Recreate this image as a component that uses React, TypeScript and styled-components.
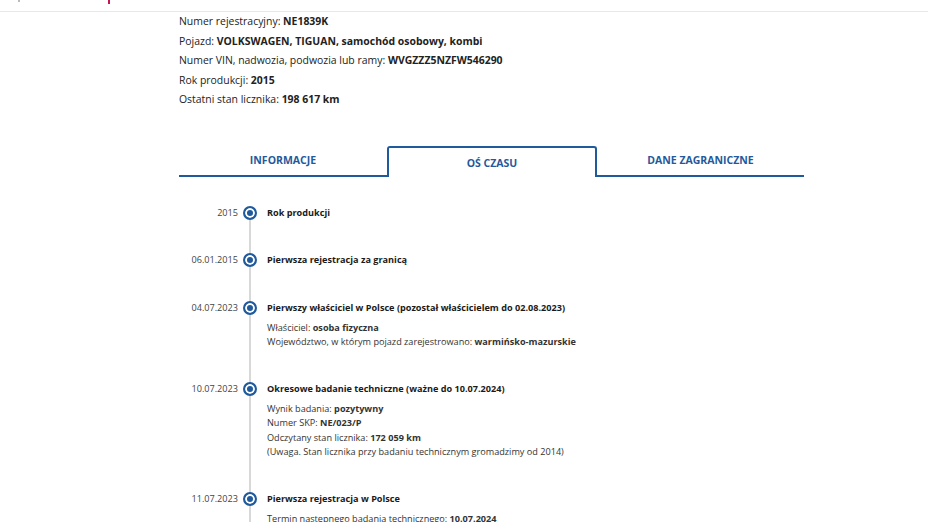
import styled, { createGlobalStyle } from "styled-components";

const blue = "#1f5a9c";
const lineGray = "#d8d8d8";

const GlobalStyle = createGlobalStyle`
	body {
		margin: 0;
		background: #fff;
		font-family: "Open Sans", "Noto Sans", sans-serif;
		color: #222;
	}
`;

const TopBar = styled.header`
	height: 11px;
	border-bottom: 1px solid #e8e8e8;
	display: flex;
	align-items: flex-start;
	padding-left: 18px;
	gap: 88px;
	overflow: hidden;
`;

const LogoMark = styled.span<{ $color: string; $h: number }>`
	width: 2px;
	height: ${(p) => p.$h}px;
	background: ${(p) => p.$color};
`;

const Main = styled.main`
	width: 625px;
	padding-left: 179px;
`;

const InfoList = styled.div`
	font-size: 10.45px;
	line-height: 19.5px;
	margin-bottom: 36px;
`;

const Tabs = styled.nav`
	display: grid;
	grid-template-columns: 208px 210px 207px;
	height: 31px;
`;

const Tab = styled.div<{ $active?: boolean }>`
	display: flex;
	align-items: center;
	justify-content: center;
	font-size: 10.5px;
	font-weight: 700;
	text-transform: uppercase;
	color: ${blue};
	box-sizing: border-box;
	border-bottom: ${(p) => (p.$active ? "none" : `2px solid ${blue}`)};
	border-top: ${(p) => (p.$active ? `2px solid ${blue}` : "none")};
	border-left: ${(p) => (p.$active ? `2px solid ${blue}` : "none")};
	border-right: ${(p) => (p.$active ? `2px solid ${blue}` : "none")};
	border-radius: ${(p) => (p.$active ? "3px 3px 0 0" : "0")};
	padding-top: ${(p) => (p.$active ? "2px" : "0")};
`;

const Timeline = styled.section`
	padding-top: 28px;
`;

const Item = styled.div`
	display: grid;
	grid-template-columns: 59px 24px 1fr;
	font-size: 9.15px;
`;

const DateCol = styled.div`
	text-align: right;
	line-height: 16px;
	color: #444;
`;

const MarkerCol = styled.div<{ $first?: boolean }>`
	display: flex;
	justify-content: center;
	align-items: flex-start;
	background: linear-gradient(${lineGray}, ${lineGray}) no-repeat;
	background-size: 2px 100%;
	background-position: center ${(p) => (p.$first ? "8px" : "0")};
`;

const Dot = styled.span`
	margin-top: 1px;
	width: 14px;
	height: 14px;
	box-sizing: border-box;
	border-radius: 50%;
	border: 2px solid ${blue};
	background: ${blue};
	box-shadow: inset 0 0 0 2px #fff;
`;

const Content = styled.div`
	padding-left: 5px;
	padding-bottom: 31.5px;
`;

const Title = styled.div`
	font-weight: 700;
	line-height: 16px;
	color: #1a1a1a;
`;

const Details = styled.div`
	margin-top: 5px;
	line-height: 14.4px;
	color: #333;
`;

type Entry = { date: string; title: string; details?: [string, string][] };

const info: [string, string][] = [
	["Numer rejestracyjny: ", "NE1839K"],
	["Pojazd: ", "VOLKSWAGEN, TIGUAN, samochód osobowy, kombi"],
	["Numer VIN, nadwozia, podwozia lub ramy: ", "WVGZZZ5NZFW546290"],
	["Rok produkcji: ", "2015"],
	["Ostatni stan licznika: ", "198 617 km"],
];

const entries: Entry[] = [
	{ date: "2015", title: "Rok produkcji" },
	{ date: "06.01.2015", title: "Pierwsza rejestracja za granicą" },
	{
		date: "04.07.2023",
		title: "Pierwszy właściciel w Polsce (pozostał właścicielem do 02.08.2023)",
		details: [
			["Właściciel: ", "osoba fizyczna"],
			["Województwo, w którym pojazd zarejestrowano: ", "warmińsko-mazurskie"],
		],
	},
	{
		date: "10.07.2023",
		title: "Okresowe badanie techniczne (ważne do 10.07.2024)",
		details: [
			["Wynik badania: ", "pozytywny"],
			["Numer SKP: ", "NE/023/P"],
			["Odczytany stan licznika: ", "172 059 km"],
			["(Uwaga. Stan licznika przy badaniu technicznym gromadzimy od 2014)", ""],
		],
	},
	{
		date: "11.07.2023",
		title: "Pierwsza rejestracja w Polsce",
		details: [["Termin następnego badania technicznego: ", "10.07.2024"]],
	},
];

export default function App() {
	return (
		<>
			<GlobalStyle />
			<TopBar>
				<LogoMark $color="#bbb" $h={2} />
				<LogoMark $color="#c8174f" $h={4} />
			</TopBar>
			<Main>
				<InfoList>
					{info.map(([label, value]) => (
						<div key={label}>
							{label}
							<b>{value}</b>
						</div>
					))}
				</InfoList>
				<Tabs>
					<Tab>Informacje</Tab>
					<Tab $active>Oś czasu</Tab>
					<Tab>Dane zagraniczne</Tab>
				</Tabs>
				<Timeline>
					{entries.map((e, i) => (
						<Item key={e.date + e.title}>
							<DateCol>{e.date}</DateCol>
							<MarkerCol $first={i === 0}>
								<Dot />
							</MarkerCol>
							<Content>
								<Title>{e.title}</Title>
								{e.details && (
									<Details>
										{e.details.map(([label, value]) => (
											<div key={label}>
												{label}
												{value && <b>{value}</b>}
											</div>
										))}
									</Details>
								)}
							</Content>
						</Item>
					))}
				</Timeline>
			</Main>
		</>
	);
}
